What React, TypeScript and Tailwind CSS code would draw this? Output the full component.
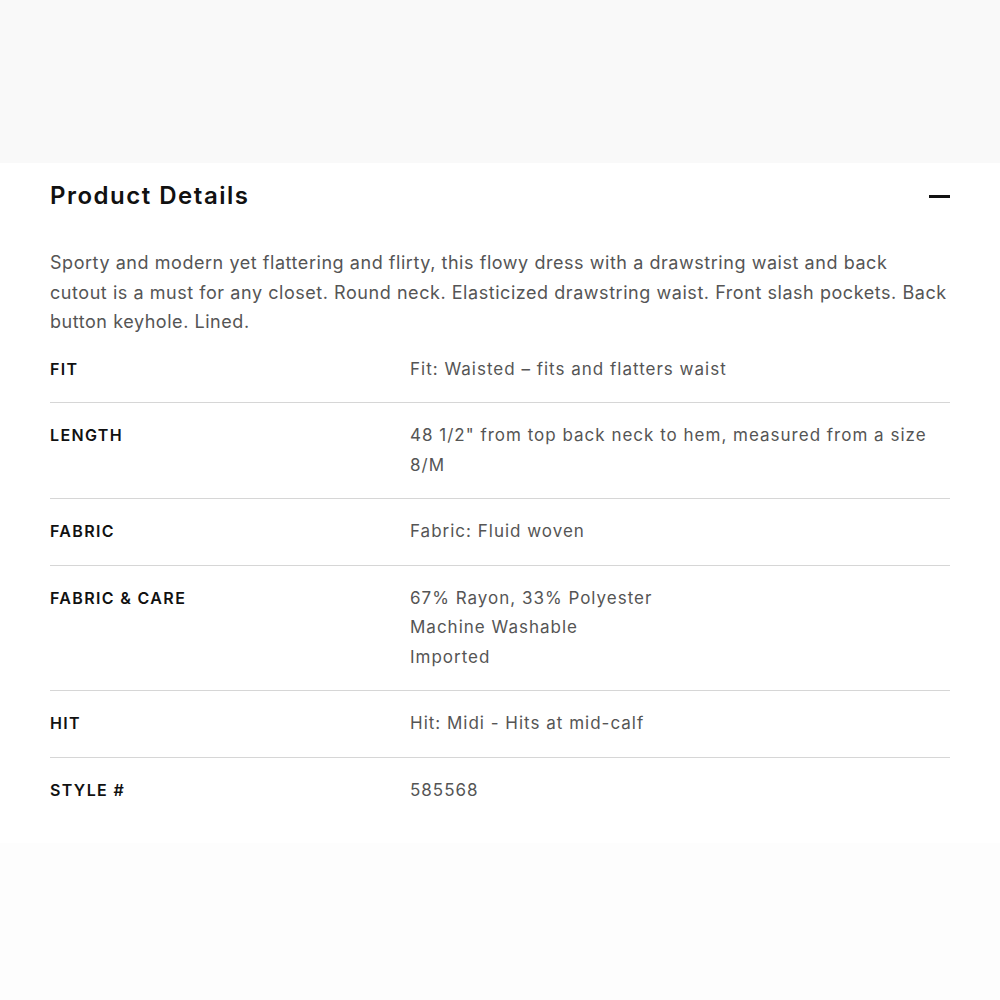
const details = [
  { label: 'FIT', value: ['Fit: Waisted – fits and flatters waist'] },
  { label: 'LENGTH', value: ['48 1/2" from top back neck to hem, measured from a size 8/M'] },
  { label: 'FABRIC', value: ['Fabric: Fluid woven'] },
  { label: 'FABRIC & CARE', value: ['67% Rayon, 33% Polyester', 'Machine Washable', 'Imported'] },
  { label: 'HIT', value: ['Hit: Midi - Hits at mid-calf'] },
  { label: 'STYLE #', value: ['585568'] },
]

export default function App() {
  return (
    <div className="min-h-[1000px] bg-[#fdfdfd] font-['Inter',sans-serif]">
      <div className="h-[163px] bg-[#f9f9f9]" />
      <section className="bg-white px-[50px] pb-[20px] pt-[17px]">
        <div className="flex h-[32px] items-center justify-between">
          <h2 className="text-[24px] font-semibold tracking-[1.5px] text-[#111]">Product Details</h2>
          <span className="block h-[3px] w-[21px] bg-[#111]" />
        </div>
        <p className="mt-[36px] text-[18px] leading-[29.5px] tracking-[0.55px] text-[#555]">
          Sporty and modern yet flattering and flirty, this flowy dress with a drawstring waist and back
          <br />
          cutout is a must for any closet. Round neck. Elasticized drawstring waist. Front slash pockets. Back
          <br />
          button keyhole. Lined.
        </p>
        <div>
          {details.map((row, i) => (
            <div
              key={row.label}
              className={`grid grid-cols-[360px_1fr] pb-[18px] pt-[18px] ${i < details.length - 1 ? 'border-b border-[#d6d6d6]' : ''}`}
            >
              <div className="text-[16px] font-semibold leading-[29.5px] tracking-[1.35px] text-[#111]">{row.label}</div>
              <div className="text-[17px] leading-[29.5px] tracking-[1px] text-[#555]">
                {row.value.map((line) => (
                  <div key={line}>{line}</div>
                ))}
              </div>
            </div>
          ))}
        </div>
      </section>
    </div>
  )
}
